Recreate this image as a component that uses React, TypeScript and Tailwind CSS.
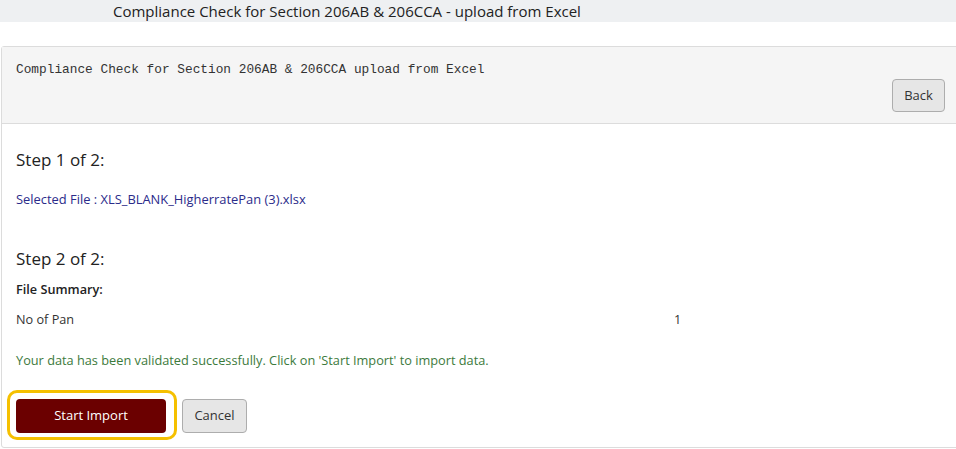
import React from "react";

export default function App() {
  const sans = { fontFamily: '"Open Sans", "Noto Sans", sans-serif' };
  return (
    <div className="w-[956px] h-[449px] overflow-hidden bg-white text-[#333]" style={sans}>
      <div className="h-[22px] bg-[#eef0f2] pl-[113px] text-[15px] leading-[22px] text-[#222]">
        Compliance Check for Section 206AB &amp; 206CCA - upload from Excel
      </div>
      <div className="mt-[24px] ml-[1px] w-[970px] border border-[#dcdcdc] rounded-[3px]">
        <div className="bg-[#f5f5f5] border-b border-[#dcdcdc] pl-[14px] pr-[25px] pt-[15px] pb-[10px] h-[77px]">
          <div className="text-[12.8px] leading-[16px] text-[#333]" style={{ fontFamily: '"Liberation Mono", "DejaVu Sans Mono", monospace' }}>
            Compliance Check for Section 206AB &amp; 206CCA upload from Excel
          </div>
          <div className="flex justify-end mt-[1px]">
            <button className="w-[53px] h-[33px] bg-[#e6e6e6] border border-[#adadad] rounded-[4px] text-[13px] text-[#333]">
              Back
            </button>
          </div>
        </div>
        <div className="pl-[14px] pt-[24px] h-[323px]">
          <div className="text-[17px] leading-[24px] text-[#222]">Step 1 of 2:</div>
          <div className="mt-[19px] text-[12.9px] leading-[17px] text-[#2b2b8a]">
            Selected File : XLS_BLANK_HigherratePan (3).xlsx
          </div>
          <div className="mt-[39px] text-[17px] leading-[24px] text-[#222]">Step 2 of 2:</div>
          <div className="mt-[10px] text-[12.7px] leading-[17px] font-semibold text-[#222]">File Summary:</div>
          <div className="mt-[13px] flex text-[12.7px] leading-[17px] text-[#333]">
            <div className="w-[658px]">No of Pan</div>
            <div>1</div>
          </div>
          <div className="mt-[24px] text-[12.75px] leading-[17px] text-[#3c7a3c]">
            Your data has been validated successfully. Click on 'Start Import' to import data.
          </div>
          <div className="mt-[21px] flex items-center -ml-[9px]">
            <div className="border-[3px] border-[#f5c000] rounded-[10px] pl-[6px] pr-[8px] pt-[6px] pb-[4px]">
              <button className="w-[150px] h-[34px] bg-[#6b0000] rounded-[4px] text-white text-[13px]">
                Start Import
              </button>
            </div>
            <button className="ml-[5px] mt-[1px] w-[65px] h-[34px] bg-[#e6e6e6] border border-[#adadad] rounded-[4px] text-[13px] text-[#333]">
              Cancel
            </button>
          </div>
        </div>
      </div>
    </div>
  );
}
